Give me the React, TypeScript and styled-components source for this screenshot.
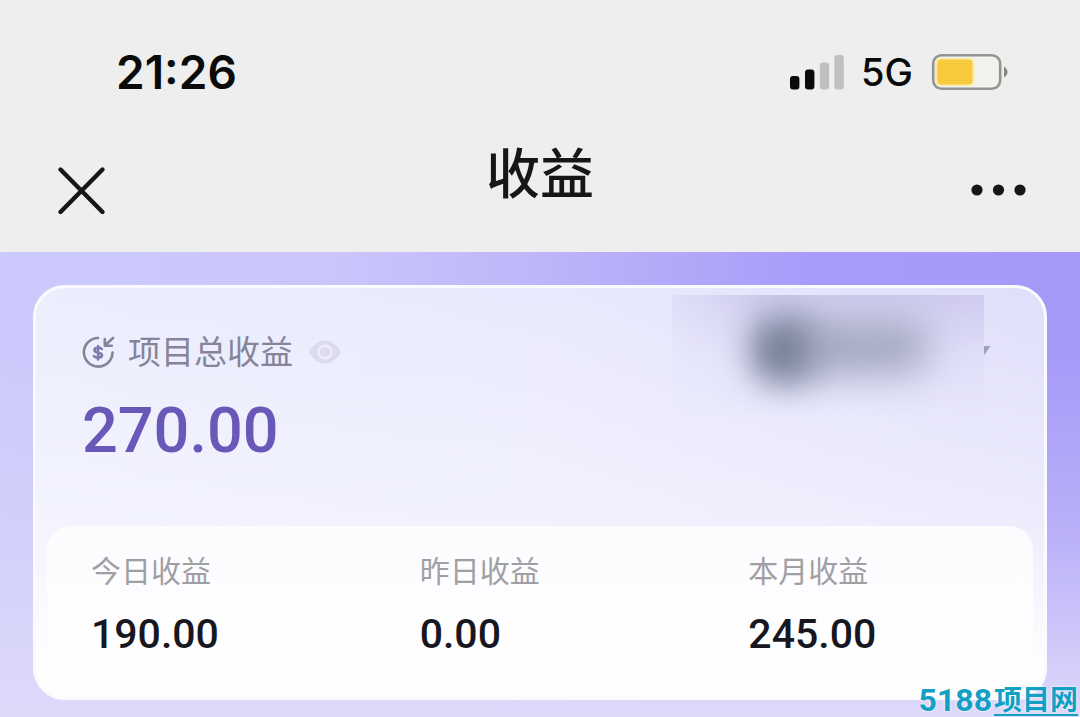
import React from "react";
import styled, { createGlobalStyle } from "styled-components";

const GlobalStyle = createGlobalStyle`
  *, *::before, *::after { box-sizing: border-box; }
  body {
    margin: 0;
    background: #eeeeee;
    font-family: Inter, "Noto Sans CJK SC", sans-serif;
  }
`;

const Page = styled.div`
  position: relative;
  min-height: 100vh;
  display: flex;
  flex-direction: column;
`;

const Header = styled.header`
  background: #eeeeee;
  padding: 44px 52px 36px;
`;

const StatusBar = styled.div`
  display: flex;
  justify-content: space-between;
  align-items: center;
  height: 56px;
  padding: 0 20px 0 64px;
`;

const Clock = styled.time`
  font-size: 46px;
  line-height: 56px;
  font-weight: 600;
  color: #0a0a0a;
`;

const Indicators = styled.div`
  display: flex;
  align-items: center;
  gap: 17px;
`;

const Network = styled.span`
  font-size: 38px;
  line-height: 56px;
  font-weight: 500;
  color: #0a0a0a;
`;

const NavBar = styled.nav`
  display: grid;
  grid-template-columns: 1fr auto 1fr;
  align-items: end;
  padding-top: 43px;
`;

const Title = styled.h1`
  margin: 0;
  padding-bottom: 9px;
  font-size: 54px;
  line-height: 64px;
  font-weight: 500;
  color: #161616;
`;

const IconButton = styled.button<{ $end?: boolean }>`
  display: flex;
  padding: 0;
  border: 0;
  background: none;
  cursor: pointer;
  justify-self: ${(p) => (p.$end ? "end" : "start")};
`;

const Main = styled.main`
  flex: 1;
  padding: 33px 33px 17px;
  background:
    linear-gradient(180deg, rgba(222, 218, 250, 0) 20%, rgba(222, 218, 250, 0.35) 60%, rgba(222, 218, 250, 1) 100%),
    linear-gradient(90deg, #cccafc 0%, #cbc6fb 30%, #bdb6f9 50%, #a79cf9 75%, #a599f8 100%);
`;

const Card = styled.section`
  border: 3px solid #fbfbff;
  border-radius: 32px;
  padding: 0 11px 11px;
  background:
    linear-gradient(180deg, rgba(252, 252, 255, 0) 0%, rgba(250, 250, 255, 0.5) 57%, #fefeff 92%),
    linear-gradient(100deg, #eceefd 0%, #e9e9fd 50%, #dfddfa 100%);
`;

const Summary = styled.div`
  display: flex;
  justify-content: space-between;
  height: 238px;
  padding-left: 35px;
`;

const Total = styled.div`
  padding-top: 44px;
`;

const TotalLabel = styled.div`
  display: flex;
  align-items: center;
  gap: 13px;
  font-size: 33px;
  line-height: 40px;
  color: #85849a;
`;

const TotalValue = styled.div`
  margin-top: 27px;
  font-family: Roboto, sans-serif;
  font-size: 63px;
  line-height: 64px;
  font-weight: 500;
  color: #6a58b9;
`;

const Account = styled.button`
  display: flex;
  align-items: flex-start;
  height: 134px;
  margin: 7px 42px 0 0;
  padding: 0;
  border: 0;
  background: none;
  cursor: pointer;
`;

const Redacted = styled.span`
  position: relative;
  width: 312px;
  height: 122px;
  overflow: hidden;
  background: linear-gradient(180deg, rgba(198, 193, 232, 0.7) 0%, rgba(214, 210, 244, 0.3) 50%, rgba(226, 222, 248, 0) 100%);
  mask-image: linear-gradient(90deg, rgba(0, 0, 0, 0.3) 0%, #000 28%);

  &::before,
  &::after {
    content: "";
    position: absolute;
  }

  &::before {
    top: 20px;
    left: 76px;
    width: 74px;
    height: 70px;
    border-radius: 35px;
    background: #737d94;
    filter: blur(17px);
  }

  &::after {
    top: 27px;
    left: 128px;
    width: 130px;
    height: 52px;
    border-radius: 26px;
    background: rgba(148, 154, 176, 0.8);
    filter: blur(19px);
  }
`;

const Caret = styled.svg`
  margin-top: 50px;
`;

const Stats = styled.dl`
  display: grid;
  grid-template-columns: repeat(3, 1fr);
  margin: 0;
  padding: 25px 0 28px;
  border-radius: 24px;
  background: linear-gradient(180deg, #fcfcff 0%, #ffffff 100%);
`;

const Stat = styled.div`
  padding-left: 44px;
`;

const StatLabel = styled.dt`
  font-size: 30px;
  line-height: 40px;
  font-weight: 400;
  color: #a0a0a4;
`;

const StatValue = styled.dd`
  margin: 19px 0 0;
  font-family: Roboto, sans-serif;
  font-size: 41px;
  line-height: 48px;
  font-weight: 500;
  color: #17171f;
`;

const Watermark = styled.div`
  position: absolute;
  right: 2px;
  bottom: 1px;
  display: flex;
  align-items: flex-end;
  gap: 2px;
  color: #149fc6;
  font-weight: 700;
  text-shadow: 0 0 2px #ffffff, 0 0 2px #ffffff;
`;

const WatermarkNumber = styled.span`
  font-family: Roboto, sans-serif;
  font-size: 32px;
  line-height: 32px;
`;

const WatermarkName = styled.span`
  font-size: 28px;
  line-height: 28px;
  border-bottom: 2px solid #149fc6;
`;

const SignalIcon = () => (
  <svg width="56" height="36" viewBox="0 0 56 36" aria-label="信号">
    <rect x="2" y="22" width="9.4" height="13.5" rx="3" fill="#0a0a0a" />
    <rect x="17" y="15.5" width="9.4" height="20" rx="3" fill="#0a0a0a" />
    <rect x="31.8" y="8.5" width="9.4" height="27" rx="3" fill="#bfbfbf" />
    <rect x="46.4" y="1" width="9.4" height="34.5" rx="3" fill="#bfbfbf" />
  </svg>
);

const BatteryIcon = () => (
  <svg width="78" height="38" viewBox="0 0 78 38" aria-label="电量">
    <rect x="3.2" y="2.2" width="67" height="33.6" rx="8.5" fill="#f1f1ee" stroke="#92958f" strokeWidth="2.6" />
    <rect x="5.4" y="5" width="39" height="28" rx="5" fill="#fbe9a4" />
    <rect x="7.4" y="6.5" width="35" height="25" rx="4" fill="#f7ca3e" />
    <path d="M74 13.5 Q77.5 16 77.5 19 Q77.5 22 74 24.5 Z" fill="#858585" />
  </svg>
);

const CloseIcon = () => (
  <svg width="58" height="52" viewBox="0 0 58 52">
    <path d="M8.5 5.5 L50.5 48 M50.5 5.5 L8.5 48" fill="none" stroke="#161616" strokeWidth="4.4" strokeLinecap="round" />
  </svg>
);

const MoreIcon = () => (
  <svg width="58" height="52" viewBox="0 0 58 52">
    <circle cx="7" cy="26" r="5.6" fill="#161616" />
    <circle cx="28.5" cy="26" r="5.6" fill="#161616" />
    <circle cx="50" cy="26" r="5.6" fill="#161616" />
  </svg>
);

const IncomeIcon = () => (
  <svg width="33" height="34" viewBox="0 0 33 34" fill="none" stroke="#85849a" strokeWidth="2.6" strokeLinecap="round" strokeLinejoin="round">
    <path d="M16 3 A14.3 14.3 0 1 0 30.5 17.5" />
    <path d="M31 3 L23.5 10 M22.8 4 V10.8 H29.8" />
    <path d="M19.8 14 C19 12.5 12.4 12 12.4 15.2 C12.4 18.3 20 16.7 20 20.2 C20 23.4 13 23 12 21 M16.1 11 V24.5" stroke="#8279ae" />
  </svg>
);

const EyeIcon = () => (
  <svg width="36" height="26" viewBox="0 0 36 26" fill="none">
    <path d="M4 13 C12 -1 26 -1 34 13 C26 27 12 27 4 13 Z" fill="#dcdbec" stroke="#dcdbec" strokeWidth="2" />
    <circle cx="19" cy="13" r="6.5" fill="#dddced" stroke="#efeefa" strokeWidth="2.2" />
  </svg>
);

const stats = [
  { label: "今日收益", value: "190.00" },
  { label: "昨日收益", value: "0.00" },
  { label: "本月收益", value: "245.00" },
];

export default function App() {
  return (
    <Page>
      <GlobalStyle />
      <Header>
        <StatusBar>
          <Clock>21:26</Clock>
          <Indicators>
            <SignalIcon />
            <Network>5G</Network>
            <BatteryIcon />
          </Indicators>
        </StatusBar>
        <NavBar>
          <IconButton aria-label="关闭">
            <CloseIcon />
          </IconButton>
          <Title>收益</Title>
          <IconButton $end aria-label="更多">
            <MoreIcon />
          </IconButton>
        </NavBar>
      </Header>
      <Main>
        <Card>
          <Summary>
            <Total>
              <TotalLabel>
                <IncomeIcon />
                <span>项目总收益</span>
                <IconButton aria-label="隐藏金额">
                  <EyeIcon />
                </IconButton>
              </TotalLabel>
              <TotalValue>270.00</TotalValue>
            </Total>
            <Account aria-label="切换账户">
              <Redacted />
              <Caret width="7" height="12" viewBox="0 0 7 12">
                <path d="M0 1 H6.5 L0 10.5 Z" fill="#a3a0bc" />
              </Caret>
            </Account>
          </Summary>
          <Stats>
            {stats.map((s) => (
              <Stat key={s.label}>
                <StatLabel>{s.label}</StatLabel>
                <StatValue>{s.value}</StatValue>
              </Stat>
            ))}
          </Stats>
        </Card>
      </Main>
      <Watermark>
        <WatermarkNumber>5188</WatermarkNumber>
        <WatermarkName>项目网</WatermarkName>
      </Watermark>
    </Page>
  );
}
